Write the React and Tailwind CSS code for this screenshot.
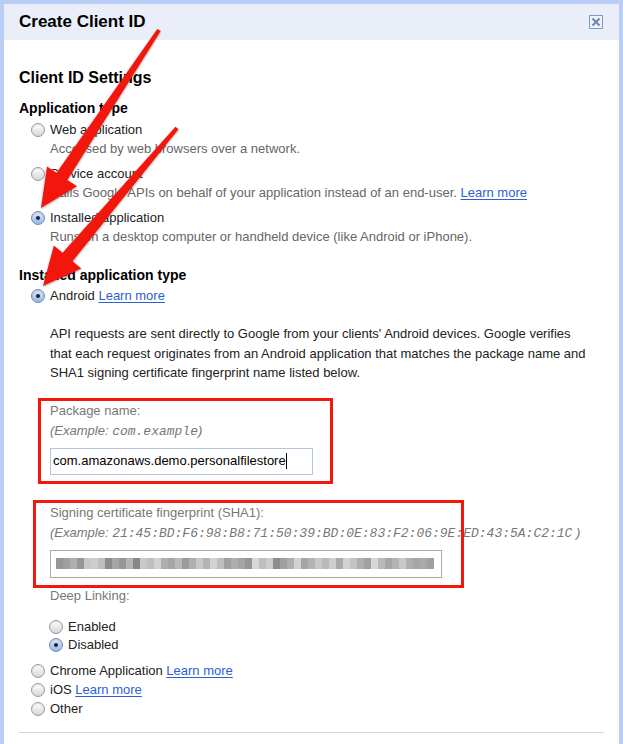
import React from "react";

const FONT = { fontFamily: '"Liberation Sans", Arial, sans-serif' };

function Radio({ checked }) {
  if (checked) {
    return (
      <span className="relative inline-flex w-[14px] h-[14px] shrink-0 rounded-full border border-[#6f8cb8] bg-gradient-to-b from-[#dfe9f8] to-[#97b7e6] items-center justify-center shadow-[inset_0_1px_1px_rgba(0,0,0,0.15)]">
        <span className="w-[4px] h-[4px] rounded-full bg-[#1a2433]" />
      </span>
    );
  }
  return (
    <span className="inline-flex w-[14px] h-[14px] shrink-0 rounded-full border border-[#9b9b9b] bg-gradient-to-b from-[#ffffff] to-[#d6d6d6] shadow-[inset_0_1px_1px_rgba(0,0,0,0.12)]" />
  );
}

function Link({ children }) {
  return <span className="text-[#2c5fd3] underline underline-offset-[2px]">{children}</span>;
}

const GRAYS = [150,160,175,150,200,205,190,140,165,150,180,135,200,190,210,175,165,185,155,175,200,180,210,190,160,175,165,150,215,190,205,140,160,175,210,165,180,200,185,205,170,210,195,175,160,215,185,165,180,200,175,165,170,160];

function Arrows() {
  return (
    <svg className="absolute left-0 top-0 pointer-events-none" width="623" height="744" viewBox="0 0 623 744">
      <defs>
        <filter id="sh" x="-20%" y="-20%" width="140%" height="140%">
          <feDropShadow dx="0" dy="1" stdDeviation="1.2" floodColor="#000" floodOpacity="0.35" />
        </filter>
      </defs>
      <polygon
        filter="url(#sh)"
        fill="#f2180c"
        points="157.3,28.9 56.6,172.7 47,166.4 41,208 77,186.2 67.4,179.9 160.7,31.1"
      />
      <polygon
        filter="url(#sh)"
        fill="#f2180c"
        points="175.5,126.7 62.6,252.8 53.9,245.4 43,286 81.3,268.6 72.6,261.2 178.5,129.3"
      />
    </svg>
  );
}

export default function App() {
  return (
    <div className="relative w-[623px] h-[744px] overflow-hidden bg-[#b9cdf6] pt-[4px] px-[4px]" style={FONT}>
      <div className="relative z-0 bg-white h-full text-[13px] text-[#222]">
        <div className="h-[36px] bg-[#e9eef8] flex items-center justify-between pl-[15px] pr-[16px]">
          <span className="text-[17px] font-bold text-black">Create Client ID</span>
          <span className="w-[14px] h-[14px] border border-[#7f9cc2] bg-[#eef2fa] flex items-center justify-center">
            <svg width="10" height="10" viewBox="0 0 10 10">
              <path d="M1.5 1.5 L8.5 8.5 M8.5 1.5 L1.5 8.5" stroke="#6a88b0" strokeWidth="2" />
            </svg>
          </span>
        </div>

        <div className="pl-[15px] pr-[15px]">
          <div className="mt-[28px] h-[20px] leading-[20px] text-[16px] font-bold text-black">Client ID Settings</div>
          <div className="mt-[10px] h-[20px] leading-[20px] text-[14px] font-bold text-black">Application type</div>

          <div className="mt-[3px] pl-[12px] flex flex-col gap-[6px]">
            <div>
              <div className="flex items-center h-[18px] gap-[5px]">
                <Radio />
                <span>Web application</span>
              </div>
              <div className="pl-[19px] h-[20px] leading-[20px] text-[#666]">Accessed by web browsers over a network.</div>
            </div>
            <div>
              <div className="flex items-center h-[18px] gap-[5px]">
                <Radio />
                <span>Service account</span>
              </div>
              <div className="pl-[19px] h-[20px] leading-[20px] text-[#666]">
                Calls Google APIs on behalf of your application instead of an end-user. <Link>Learn more</Link>
              </div>
            </div>
            <div>
              <div className="flex items-center h-[18px] gap-[5px]">
                <Radio checked />
                <span>Installed application</span>
              </div>
              <div className="pl-[19px] h-[20px] leading-[20px] text-[#666]">
                Runs on a desktop computer or handheld device (like Android or iPhone).
              </div>
            </div>
          </div>

          <div className="mt-[18px] h-[20px] leading-[20px] text-[14px] font-bold text-black">Installed application type</div>
          <div className="mt-[2px] pl-[12px] flex items-center h-[18px] gap-[5px]">
            <Radio checked />
            <span>
              Android <Link>Learn more</Link>
            </span>
          </div>

          <p className="mt-[19px] pl-[31px] leading-[19.5px] whitespace-nowrap">
            API requests are sent directly to Google from your clients' Android devices. Google verifies
            <br />
            that each request originates from an Android application that matches the package name and
            <br />
            SHA1 signing certificate fingerprint name listed below.
          </p>

          <div className="mt-[15px] ml-[19px] w-[295px] border-[3px] border-[#f2180c] pl-[9px] pb-[6px]">
            <div className="h-[20px] leading-[20px] text-[#777]">Package name:</div>
            <div className="h-[19px] leading-[19px] text-[#777] whitespace-nowrap">
              <span className="italic">(Example: </span>
              <span className="italic" style={{ fontFamily: '"Liberation Mono", "Courier New", monospace' }}>com.example</span>
              <span className="italic">)</span>
            </div>
            <div className="mt-[8px] w-[263px] h-[27px] border border-[#b4c6de] bg-white flex items-center pl-[2px]">
              <span className="text-black">com.amazonaws.demo.personalfilestore</span>
              <span className="w-[1px] h-[16px] bg-black" />
            </div>
          </div>

          <div className="mt-[16px] ml-[14px] w-[431px] border-[3px] border-[#f2180c] pl-[14px] pb-[7px]">
            <div className="h-[20px] leading-[20px] text-[#777]">Signing certificate fingerprint (SHA1):</div>
            <div className="relative z-[-1] h-[20px] leading-[20px] text-[#777] whitespace-nowrap">
              <span className="italic">(Example: </span>
              <span className="italic" style={{ fontFamily: '"Liberation Mono", "Courier New", monospace' }}>
                21:45:BD:F6:98:B8:71:50:39:BD:0E:83:F2:06:9E:ED:43:5A:C2:1C
              </span>
              <span className="italic"> )</span>
            </div>
            <div className="mt-[7px] w-[392px] h-[28px] border border-[#aaaaaa] bg-white flex items-center pl-[5px]">
              <svg width="378" height="11" viewBox="0 0 378 11">
                {GRAYS.map((g, i) => (
                  <rect key={i} x={i * 7} y="0" width="7" height="11" fill={`rgb(${g},${g},${g})`} />
                ))}
              </svg>
            </div>
          </div>

          <div className="pl-[31px] h-[16px] leading-[16px] text-[#777]">Deep Linking:</div>

          <div className="mt-[14px] pl-[30px]">
            <div className="flex items-center h-[18px] gap-[5px]">
              <Radio />
              <span>Enabled</span>
            </div>
            <div className="flex items-center h-[18px] gap-[5px]">
              <Radio checked />
              <span>Disabled</span>
            </div>
          </div>

          <div className="mt-[8px] pl-[12px]">
            <div className="flex items-center h-[19px] gap-[5px]">
              <Radio />
              <span>
                Chrome Application <Link>Learn more</Link>
              </span>
            </div>
            <div className="flex items-center h-[19px] gap-[5px]">
              <Radio />
              <span>
                iOS <Link>Learn more</Link>
              </span>
            </div>
            <div className="flex items-center h-[19px] gap-[5px]">
              <Radio />
              <span>Other</span>
            </div>
          </div>

          <div className="mt-[13px] h-[1px] bg-[#ccd5e6]" />
        </div>
      </div>
      <Arrows />
    </div>
  );
}
